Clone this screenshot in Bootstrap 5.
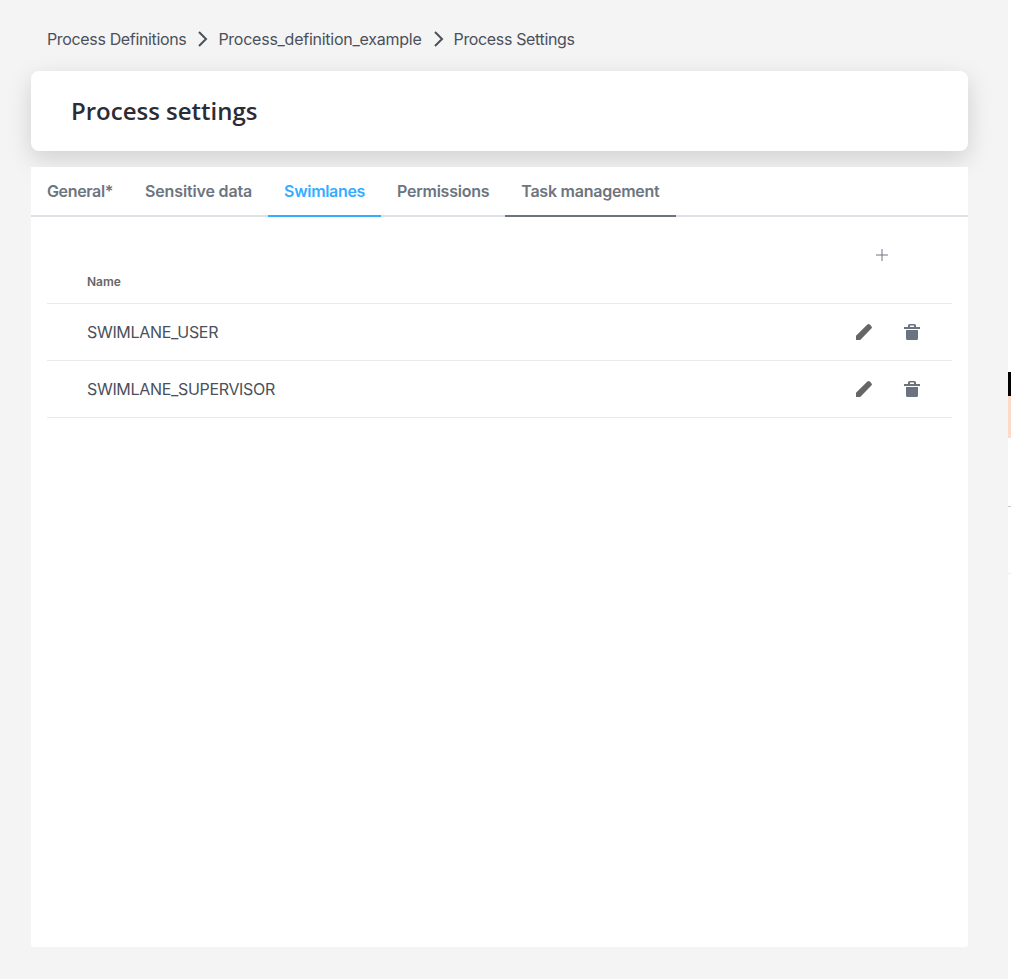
<!DOCTYPE html>
<html lang="en">
<head>
<meta charset="utf-8">
<meta name="viewport" content="width=device-width, initial-scale=1">
<title>Process settings</title>
<link href="https://cdn.jsdelivr.net/npm/bootstrap@5.3.0/dist/css/bootstrap.min.css" rel="stylesheet">
<style>
body{font-family:Inter,"Liberation Sans",sans-serif;background:#f4f4f4;color:#4b505b;font-size:16px;line-height:24px;height:979px;overflow:hidden}
.page-main{padding:0 40px 32px 31px}
.crumbs{height:71px;padding:7px 16px 0;letter-spacing:-.35px;gap:8px}
.crumbs a{color:#4b505b}
.crumbs .crumb-long{letter-spacing:-.25px}
.title-card{height:80px;border-radius:8px;padding:0 40px;box-shadow:0 8px 24px rgba(0,0,0,.15);margin-bottom:16px}
.title-card h1{font:600 24px/32px "Open Sans",sans-serif;color:#2b2c36}
.panel{border-radius:0 0 3px 3px}
.settings-tabs{height:50px;box-shadow:inset 0 -2px #dee2e6}
.settings-tabs .nav-link{padding:12px 16px 12px;height:50px;border-bottom:2px solid transparent;color:#6c7580;font-weight:600;line-height:24px;letter-spacing:-.24px;white-space:nowrap}
.settings-tabs .tab-tight{letter-spacing:-.36px}
.settings-tabs .tab-loose{letter-spacing:-.15px}
.settings-tabs .nav-link.active{color:#35adff;border-color:#35adff;letter-spacing:-.32px}
.settings-tabs .nav-link.focused{border-color:#6b7280}
.lane-head{height:87px;border-bottom:1px solid #e8eaed;padding:26px 63px 0 40px}
.lane-head .label{font-size:12px;font-weight:600;line-height:16px;color:#666;padding-top:31px}
.lane{height:57px;border-bottom:1px solid #e8eaed;padding:0 28px 0 40px;letter-spacing:-.32px}
.lane .actions{gap:24px}
.icon-btn{width:24px;height:24px;line-height:0}
.icon-add{width:14px}
.edge-strip{width:3px}
</style>
</head>
<body class="d-flex">
<main class="page-main flex-grow-1 d-flex flex-column">
  <nav class="crumbs d-flex align-items-center" aria-label="breadcrumb">
    <a class="text-decoration-none" href="#">Process Definitions</a>
    <svg width="16" height="16" viewBox="0 0 16 16" fill="none" stroke="#4b505b" stroke-width="2"><path d="M5 1l7 7-7 7"/></svg>
    <a class="crumb-long text-decoration-none" href="#">Process_definition_example</a>
    <svg width="16" height="16" viewBox="0 0 16 16" fill="none" stroke="#4b505b" stroke-width="2"><path d="M5 1l7 7-7 7"/></svg>
    <a class="text-decoration-none" href="#">Process Settings</a>
  </nav>
  <header class="title-card bg-white d-flex align-items-center"><h1 class="m-0">Process settings</h1></header>
  <section class="panel bg-white flex-grow-1 position-relative">
    <ul class="nav settings-tabs flex-nowrap">
      <li class="nav-item"><a class="nav-link tab-tight" href="#">General*</a></li>
      <li class="nav-item"><a class="nav-link tab-loose" href="#">Sensitive data</a></li>
      <li class="nav-item"><a class="nav-link active" href="#">Swimlanes</a></li>
      <li class="nav-item"><a class="nav-link" href="#">Permissions</a></li>
      <li class="nav-item"><a class="nav-link focused" href="#">Task management</a></li>
    </ul>
    <div class="mx-3">
      <div class="lane-head d-flex justify-content-between">
        <span class="label">Name</span>
        <button class="btn border-0 p-0 icon-btn icon-add" aria-label="Add"><svg width="14" height="24" viewBox="0 0 14 24" fill="none" stroke="#6b7280" stroke-opacity=".55" stroke-width="1.8"><path d="M1 12h12"/><path d="M7 6v12"/></svg></button>
      </div>
      <div class="lane d-flex align-items-center justify-content-between">
        <span>SWIMLANE_USER</span>
        <div class="actions d-flex">
          <button class="btn border-0 p-0 icon-btn" aria-label="Edit"><svg width="24" height="24" viewBox="0 0 24 24" fill="#666"><path d="M4 20v-4.200L15.400 4.600q1.200-1.200 2.400 0l1.600 1.600q1.200 1.200 0 2.400L8.200 20z"/></svg></button>
          <button class="btn border-0 p-0 icon-btn" aria-label="Delete"><svg width="24" height="24" viewBox="0 0 24 24" fill="#6b7280"><path fill-rule="evenodd" d="M9.500 4h5q1.500 0 1.500 1.500V7h4v2H4V7h4V5.500Q8 4 9.500 4zM10 5.500V7h4V5.500zM6 10h12v8.500q0 1.500-1.500 1.500h-9Q6 20 6 18.500z"/></svg></button>
        </div>
      </div>
      <div class="lane d-flex align-items-center justify-content-between">
        <span>SWIMLANE_SUPERVISOR</span>
        <div class="actions d-flex">
          <button class="btn border-0 p-0 icon-btn" aria-label="Edit"><svg width="24" height="24" viewBox="0 0 24 24" fill="#666"><path d="M4 20v-4.200L15.400 4.600q1.200-1.200 2.400 0l1.600 1.600q1.200 1.200 0 2.400L8.200 20z"/></svg></button>
          <button class="btn border-0 p-0 icon-btn" aria-label="Delete"><svg width="24" height="24" viewBox="0 0 24 24" fill="#6b7280"><path fill-rule="evenodd" d="M9.500 4h5q1.500 0 1.500 1.500V7h4v2H4V7h4V5.500Q8 4 9.500 4zM10 5.500V7h4V5.500zM6 10h12v8.500q0 1.500-1.500 1.500h-9Q6 20 6 18.500z"/></svg></button>
        </div>
      </div>
    </div>
  </section>
</main>
<aside class="edge-strip bg-white flex-shrink-0" aria-hidden="true">
  <div style="height:372px"></div>
  <div style="height:24px;background:#000"></div>
  <div style="height:42px;background:#fdd9c9"></div>
  <div style="height:69px;border-bottom:1px solid #c8c8c8"></div>
  <div style="height:67px;border-bottom:1px solid #eee"></div>
</aside>
<script src="https://cdn.jsdelivr.net/npm/bootstrap@5.3.0/dist/js/bootstrap.bundle.min.js"></script>
</body>
</html>
